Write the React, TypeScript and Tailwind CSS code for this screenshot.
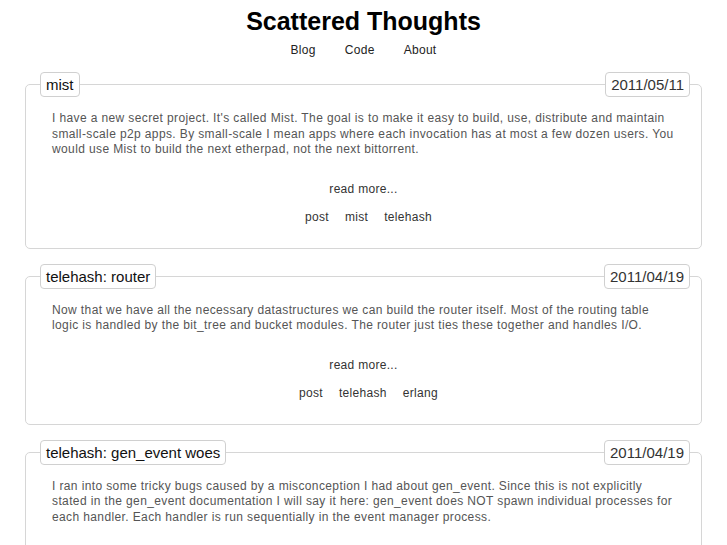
const posts = [
  {
    title: 'mist',
    date: '2011/05/11',
    body: "I have a new secret project. It's called Mist. The goal is to make it easy to build, use, distribute and maintain small-scale p2p apps. By small-scale I mean apps where each invocation has at most a few dozen users. You would use Mist to build the next etherpad, not the next bittorrent.",
    tags: ['post', 'mist', 'telehash'],
  },
  {
    title: 'telehash: router',
    date: '2011/04/19',
    body: 'Now that we have all the necessary datastructures we can build the router itself. Most of the routing table logic is handled by the bit_tree and bucket modules. The router just ties these together and handles I/O.',
    tags: ['post', 'telehash', 'erlang'],
  },
  {
    title: 'telehash: gen_event woes',
    date: '2011/04/19',
    body: 'I ran into some tricky bugs caused by a misconception I had about gen_event. Since this is not explicitly stated in the gen_event documentation I will say it here: gen_event does NOT spawn individual processes for each handler. Each handler is run sequentially in the event manager process.',
    tags: ['post', 'telehash', 'erlang'],
  },
];

export default function App() {
  return (
    <div className="min-h-screen bg-white text-[#222] font-['Liberation_Sans',Arial,sans-serif]">
      <header className="pt-[7px] text-center">
        <h1 className="text-[25px] leading-[28px] font-bold text-black">Scattered Thoughts</h1>
        <nav className="mt-[8px] flex justify-center gap-[29px] text-[12px] leading-[15px] tracking-[0.3px]">
          <a href="#">Blog</a>
          <a href="#">Code</a>
          <a href="#">About</a>
        </nav>
      </header>

      <main className="mx-[25px] mt-[26px] flex flex-col gap-[27px]">
        {posts.map((p) => (
          <article key={p.title} className="border border-[#d6d6d6] rounded-[5px] pb-[23px]">
            <div className="-mt-[13px] flex items-center justify-between pl-[14px] pr-[11px]">
              <h2 className="bg-white border border-[#d0d0d0] rounded-[4px] px-[5px] py-[3px] text-[15px] leading-[17px] text-[#111]">
                {p.title}
              </h2>
              <span className="bg-white border border-[#d0d0d0] rounded-[4px] px-[5px] py-[3px] text-[15px] leading-[17px] text-[#333]">
                {p.date}
              </span>
            </div>
            <p className="mt-[14px] px-[26px] text-[12px] leading-[15.5px] tracking-[0.38px] text-[#555]">{p.body}</p>
            <div className="mt-[24px] text-center text-[12px] leading-[15px] tracking-[0.3px] text-[#333]">
              <a href="#">read more...</a>
            </div>
            <div className="mt-[13px] pl-[10px] flex justify-center gap-[16px] text-[12px] leading-[15px] tracking-[0.3px] text-[#333]">
              {p.tags.map((t) => (
                <a key={t} href="#">{t}</a>
              ))}
            </div>
          </article>
        ))}
      </main>
    </div>
  );
}
